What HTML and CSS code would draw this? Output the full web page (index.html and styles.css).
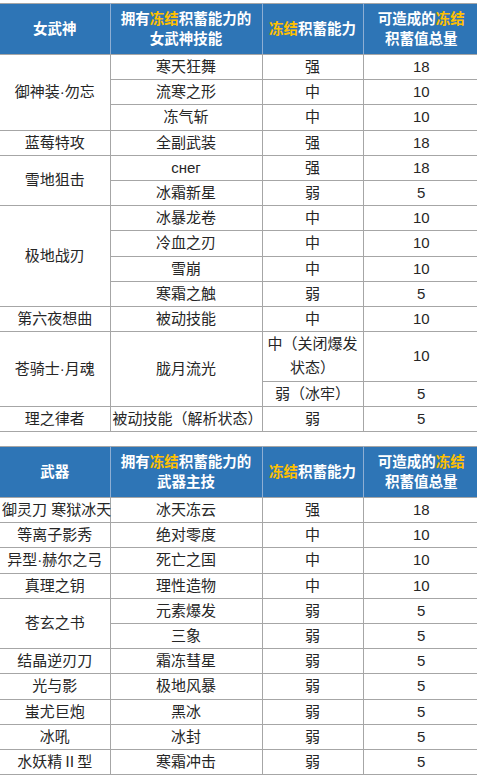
FILE: index.html
```html
<!DOCTYPE html>
<html lang="zh-CN">
<head>
<meta charset="utf-8">
<title>冻结积蓄</title>
<link rel="stylesheet" href="styles.css">
</head>
<body>
<table class="grid">
  <colgroup><col class="c1"><col class="c2"><col class="c3"><col class="c4"></colgroup>
  <thead>
    <tr>
      <th>女武神</th>
      <th>拥有<span class="hl">冻结</span>积蓄能力的<br>女武神技能</th>
      <th><span class="hl">冻结</span>积蓄能力</th>
      <th>可造成的<span class="hl">冻结</span><br>积蓄值总量</th>
    </tr>
  </thead>
  <tbody>
    <tr><td rowspan="3">御神装·勿忘</td><td>寒天狂舞</td><td>强</td><td>18</td></tr>
    <tr><td>流寒之形</td><td>中</td><td>10</td></tr>
    <tr><td>冻气斩</td><td>中</td><td>10</td></tr>
    <tr><td>蓝莓特攻</td><td>全副武装</td><td>强</td><td>18</td></tr>
    <tr><td rowspan="2">雪地狙击</td><td>снег</td><td>强</td><td>18</td></tr>
    <tr><td>冰霜新星</td><td>弱</td><td>5</td></tr>
    <tr><td rowspan="4">极地战刃</td><td>冰暴龙卷</td><td>中</td><td>10</td></tr>
    <tr><td>冷血之刃</td><td>中</td><td>10</td></tr>
    <tr><td>雪崩</td><td>中</td><td>10</td></tr>
    <tr><td>寒霜之触</td><td>弱</td><td>5</td></tr>
    <tr><td>第六夜想曲</td><td>被动技能</td><td>中</td><td>10</td></tr>
    <tr><td rowspan="2">苍骑士·月魂</td><td rowspan="2">胧月流光</td><td class="wrap">中（关闭爆发状态）</td><td>10</td></tr>
    <tr><td>弱（冰牢）</td><td>5</td></tr>
    <tr><td>理之律者</td><td>被动技能（解析状态）</td><td>弱</td><td>5</td></tr>
  </tbody>
</table>

<table class="grid second">
  <colgroup><col class="c1"><col class="c2"><col class="c3"><col class="c4"></colgroup>
  <thead>
    <tr>
      <th>武器</th>
      <th>拥有<span class="hl">冻结</span>积蓄能力的<br>武器主技</th>
      <th><span class="hl">冻结</span>积蓄能力</th>
      <th>可造成的<span class="hl">冻结</span><br>积蓄值总量</th>
    </tr>
  </thead>
  <tbody>
    <tr><td>御灵刀 寒狱冰天</td><td>冰天冻云</td><td>强</td><td>18</td></tr>
    <tr><td>等离子影秀</td><td>绝对零度</td><td>中</td><td>10</td></tr>
    <tr><td>异型·赫尔之弓</td><td>死亡之国</td><td>中</td><td>10</td></tr>
    <tr><td>真理之钥</td><td>理性造物</td><td>中</td><td>10</td></tr>
    <tr><td rowspan="2">苍玄之书</td><td>元素爆发</td><td>弱</td><td>5</td></tr>
    <tr><td>三象</td><td>弱</td><td>5</td></tr>
    <tr><td>结晶逆刃刀</td><td>霜冻彗星</td><td>弱</td><td>5</td></tr>
    <tr><td>光与影</td><td>极地风暴</td><td>弱</td><td>5</td></tr>
    <tr><td>蚩尤巨炮</td><td>黑冰</td><td>弱</td><td>5</td></tr>
    <tr><td>冰吼</td><td>冰封</td><td>弱</td><td>5</td></tr>
    <tr><td>水妖精Ⅱ型</td><td>寒霜冲击</td><td>弱</td><td>5</td></tr>
  </tbody>
</table>
</body>
</html>
```
FILE: styles.css
```css
html, body {
  margin: 0;
  padding: 0;
  overflow: hidden;
  background: #ffffff;
}
body {
  padding-top: 3px;
  font-family: "Liberation Sans", "Noto Sans CJK SC", sans-serif;
  color: #262626;
}
.grid {
  border-collapse: collapse;
  table-layout: fixed;
  width: 479px;
  font-size: 15px;
}
.second {
  margin-top: 14px;
}
.c1 { width: 110px; }
.c2 { width: 152px; }
.c3 { width: 101px; }
.c4 { width: 116px; }
.grid th {
  background: #2e75b6;
  color: #ffffff;
  font-weight: 700;
  font-size: 14.5px;
  line-height: 20px;
  padding: 5px 2px;
  text-align: center;
  vertical-align: middle;
  border: 1px solid #8eaed3;
  border-top-color: #a6a6a6;
  border-bottom-color: #a6a6a6;
  white-space: nowrap;
}
.grid th:first-child { border-left: none; }
.grid th:last-child { border-right: none; }
.hl { color: #ffc000; }
.grid td {
  text-align: center;
  vertical-align: middle;
  line-height: 24.2px;
  padding: 0 2px;
  border: 1px solid #a6a6a6;
  white-space: nowrap;
}
.grid td:first-child { border-left: none; }
.grid td:last-child { border-right: none; }
.grid td.wrap { white-space: normal; }
```
